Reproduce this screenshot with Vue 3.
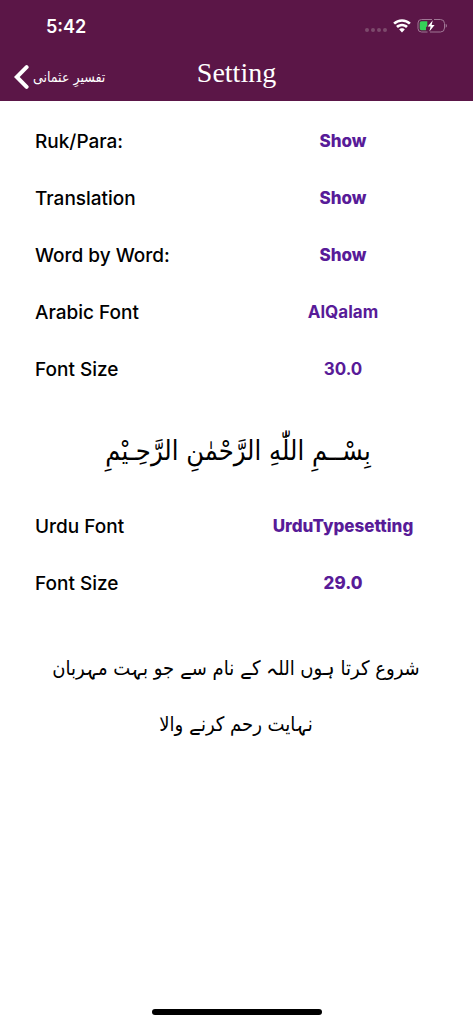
<script setup>
const first = [
  { id: 'ruk', label: 'Ruk/Para:', value: 'Show', heavy: true },
  { id: 'translation', label: 'Translation', value: 'Show', heavy: true },
  { id: 'word', label: 'Word by Word:', value: 'Show', heavy: true },
  { id: 'arabic-font', label: 'Arabic Font', value: 'AlQalam' },
  { id: 'arabic-size', label: 'Font Size', value: '30.0' },
]
const second = [
  { id: 'urdu-font', label: 'Urdu Font', value: 'UrduTypesetting', heavy: true },
  { id: 'urdu-size', label: 'Font Size', value: '29.0', heavy: true },
]
</script>

<template>
  <div class="screen">
    <header class="top">
      <div class="status">
        <span class="time">5:42</span>
        <div class="indicators">
          <span class="dots"><i></i><i></i><i></i><i></i></span>
          <svg width="18" height="14" viewBox="0 0 18 14" fill="#fff">
            <path d="M9 0.2C5.6 0.2 2.5 1.5 0.2 3.7L2 5.6A10 10 0 0 1 16 5.6L17.8 3.7C15.5 1.5 12.4 0.2 9 0.2Z" />
            <path d="M9 4.8C6.7 4.8 4.6 5.7 3.1 7.1L4.9 8.9A5.9 5.9 0 0 1 13.1 8.9L14.9 7.1C13.4 5.7 11.3 4.8 9 4.8Z" />
            <path d="M9 9.2C7.8 9.2 6.8 9.6 6.2 10.4L9 13.4L11.8 10.4C11.2 9.6 10.2 9.2 9 9.2Z" />
          </svg>
          <svg width="31" height="16" viewBox="0 0 31 16">
            <path d="M15 1.5H4.5Q1 1.5 1 5V10.5Q1 14 4.5 14H10.5M17 1.5H23.5Q27.5 1.5 27.5 5.5V10Q27.5 14 23.5 14H13" fill="none" stroke="#a07795" />
            <path d="M28.7 5.7C30.4 6.3 30.4 9.2 28.7 9.8Z" fill="#a07795" />
            <path d="M4.5 3.2H10.3V8L9 9.2V12.2H4.5Q2.7 12.2 2.7 10.4V5Q2.7 3.2 4.5 3.2Z" fill="#35d058" />
            <path d="M15.8 2.3L10.7 8.5H13.6L12.4 13.4L17.6 7H14.6Z" fill="#fff" />
          </svg>
        </div>
      </div>
      <nav class="nav">
        <button class="back" type="button">
          <svg width="15" height="24" viewBox="0 0 15 24" fill="none" stroke="#fff" stroke-width="4" stroke-linecap="round">
            <path d="M12.6 2.2L2.8 12L12.6 21.8" />
          </svg>
          <span lang="ur" dir="rtl">تفسیرِ عثمانی</span>
        </button>
        <h1>Setting</h1>
      </nav>
    </header>
    <main>
      <div v-for="r in first" :key="r.id" class="row">
        <span :id="r.id">{{ r.label }}</span>
        <button type="button" :class="{ heavy: r.heavy }" :aria-describedby="r.id">{{ r.value }}</button>
      </div>
      <p class="arabic" lang="ar" dir="rtl">بِسْــمِ اللّٰهِ الرَّحْمٰنِ الرَّحِـيْمِ</p>
      <div v-for="r in second" :key="r.id" class="row">
        <span :id="r.id">{{ r.label }}</span>
        <button type="button" :class="{ heavy: r.heavy }" :aria-describedby="r.id">{{ r.value }}</button>
      </div>
      <p class="urdu" lang="ur" dir="rtl">شروع کرتا ہوں اللہ کے نام سے جو بہت مہربان نہایت رحم کرنے والا</p>
    </main>
    <footer><span class="home"></span></footer>
  </div>
</template>

<style>
body { margin: 0; background: #fff; }
</style>

<style scoped>
.screen {
  min-height: 100vh;
  display: flex;
  flex-direction: column;
  font-family: Inter, "Liberation Sans", sans-serif;
  color: #000;
}
.top { background: #5b1647; color: #fff; }
.status {
  height: 52px;
  padding: 0 25px 0 46px;
  display: flex;
  align-items: center;
  justify-content: space-between;
}
.time { font-size: 18px; font-weight: 600; }
.indicators { display: flex; align-items: center; gap: 6px; }
.dots { display: flex; gap: 2px; padding-top: 8px; }
.dots i { width: 4px; height: 4px; border-radius: 2px; background: #7c4a6c; }
.nav {
  height: 49px;
  display: grid;
  grid-template-columns: 1fr auto 1fr;
  align-items: center;
}
button {
  border: 0;
  padding: 0;
  background: none;
  font: inherit;
  color: inherit;
  cursor: pointer;
}
.back {
  justify-self: start;
  margin-left: 14px;
  display: flex;
  align-items: center;
  gap: 4px;
  font: 14px "DejaVu Sans Condensed", "DejaVu Sans", sans-serif;
}
h1 { margin: 0; padding-bottom: 8px; font: 28px "Liberation Serif", serif; }
main { flex: 1; padding: 12px 32px 0 35px; }
.row {
  height: 57px;
  display: grid;
  grid-template-columns: 1fr 196px;
  align-items: center;
  font-size: 19px;
  font-weight: 500;
}
.row button {
  padding-bottom: 2px;
  color: #581b98;
  font-size: 17px;
  font-weight: 700;
}
.row .heavy { font-weight: 800; }
.arabic {
  margin: 0;
  padding-top: 6px;
  line-height: 94px;
  font-size: 27px;
  font-family: "DejaVu Sans Condensed", "DejaVu Sans", sans-serif;
  text-align: center;
}
.urdu {
  margin: 28px 10px 0 6px;
  line-height: 56px;
  font-size: 20px;
  font-family: "DejaVu Sans Condensed", "DejaVu Sans", sans-serif;
  text-align: center;
}
footer { display: flex; justify-content: center; padding-bottom: 9px; }
.home { width: 170px; height: 6px; border-radius: 3px; background: #000; }
</style>
